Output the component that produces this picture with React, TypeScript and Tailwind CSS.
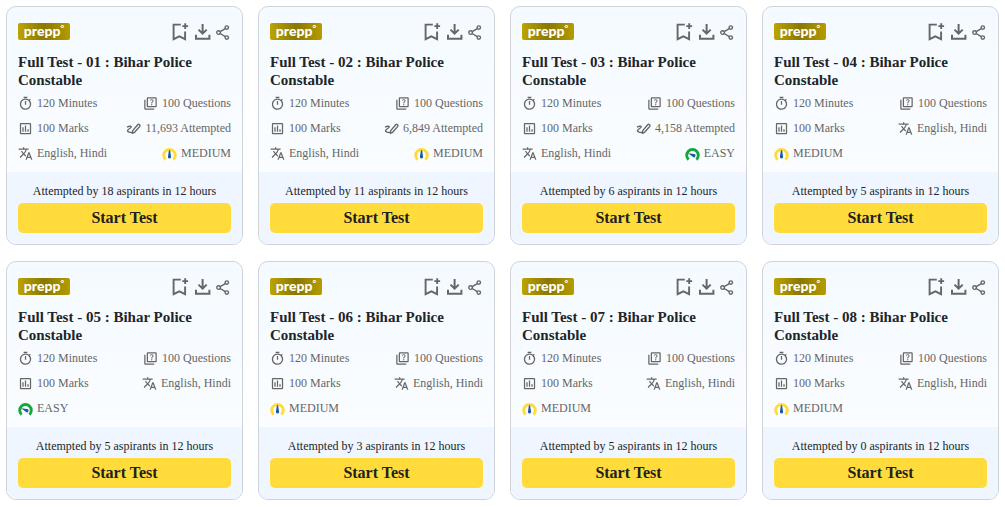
import type { ReactNode } from "react";
import { MdOutlineAssessment, MdOutlineQuiz, MdOutlineTimer, MdTranslate } from "react-icons/md";

type Level = "EASY" | "MEDIUM";

interface Test {
  id: string;
  attempted?: string;
  level: Level;
  recent: number;
}

const tests: Test[] = [
  { id: "01", attempted: "11,693", level: "MEDIUM", recent: 18 },
  { id: "02", attempted: "6,849", level: "MEDIUM", recent: 11 },
  { id: "03", attempted: "4,158", level: "EASY", recent: 6 },
  { id: "04", level: "MEDIUM", recent: 5 },
  { id: "05", level: "EASY", recent: 5 },
  { id: "06", level: "MEDIUM", recent: 3 },
  { id: "07", level: "MEDIUM", recent: 5 },
  { id: "08", level: "MEDIUM", recent: 0 },
];

function BookmarkIcon() {
  return (
    <svg width="18" height="18" viewBox="0 0 18 18" fill="none" stroke="currentColor" strokeWidth="1.9" aria-hidden="true">
      <path d="M8.8 1.6H1.6v14.6l5.8-2.8 5.7 2.8V8.4" />
      <path d="M13.2.2v5.9M10.3 3.1h5.8" />
    </svg>
  );
}

function DownloadIcon() {
  return (
    <svg width="16" height="18" viewBox="0 0 16 18" fill="none" stroke="currentColor" strokeWidth="2" aria-hidden="true">
      <path d="M7.6 1v9.4M3.5 6.6l4.1 4.1 4.1-4.1M1 11.8v4h13.4v-4" />
    </svg>
  );
}

function ShareIcon() {
  return (
    <svg width="15" height="18" viewBox="0 0 15 18" fill="none" stroke="currentColor" strokeWidth="1.4" aria-hidden="true">
      <circle cx="2.6" cy="9.6" r="1.8" />
      <circle cx="10.8" cy="4.6" r="1.7" />
      <circle cx="10.8" cy="14.6" r="1.7" />
      <path d="m4.2 8.7 5.1-3.1M4.2 10.5l5.1 3.1" />
    </svg>
  );
}

function PenIcon() {
  return (
    <svg width="15" height="14" viewBox="0 0 15 14" fill="none" stroke="currentColor" strokeWidth="1.4" strokeLinejoin="round" aria-hidden="true">
      <path d="m6.3 11.3.4-2.7 5-5.9q.9-.8 1.8 0t.1 1.9l-5 5.7z" />
      <path d="M1 5.2c1.4-.9 3.8-1.5 4.3-.6.6 1.3-3.8 2.4-3.8 4.1 0 1.2 1.8 1.6 4.8 1.9" />
    </svg>
  );
}

function GaugeIcon({ level }: { level: Level }) {
  const easy = level === "EASY";
  return (
    <svg width="15" height="14" viewBox="0 0 15 14" fill="none" aria-hidden="true">
      <path d="M3.6 12.6A5.8 5.8 0 1 1 11.4 12.6" stroke={easy ? "#16a63a" : "#ffdc3c"} strokeWidth="2.9" />
      {easy ? (
        <path d="m3 6.3 6 .7a1.6 1.6 0 1 1-1.2 2.8z" fill="#1a57a5" />
      ) : (
        <path d="M6.9 3.2h1.2l.9 6.2a1.6 1.6 0 1 1-3 0z" fill="#1a57a5" />
      )}
    </svg>
  );
}

function Meta({ icon, children }: { icon: ReactNode; children: ReactNode }) {
  return (
    <li className="flex h-6 items-center gap-1 text-xs whitespace-nowrap text-[#666666] even:justify-self-end">
      <span className="flex w-[15px] shrink-0 justify-center pt-px">{icon}</span>
      <span>{children}</span>
    </li>
  );
}

function IconButton({ label, children }: { label: string; children: ReactNode }) {
  return (
    <button type="button" aria-label={label} className="cursor-pointer text-[#666666]">
      {children}
    </button>
  );
}

function TestCard({ test }: { test: Test }) {
  return (
    <article className="flex flex-col overflow-hidden rounded-[10px] border border-[#cfd4da] bg-linear-to-b from-[#f4faff] to-[#fdfeff]">
      <div className="grow px-[11px] pt-4 pb-[7px]">
        <header className="flex h-[17px] items-center justify-between">
          <span className="flex h-[17px] w-[52px] items-center justify-center rounded-xs bg-linear-to-r from-[#bea400] via-[#8a7800] to-[#b59c00] font-['Lato',sans-serif] text-sm leading-[14px] font-black text-white">
            <span className="pb-[2px]">prepp</span>
            <span className="self-start text-[9px] leading-[12px]">°</span>
          </span>
          <div className="flex items-center gap-[5px]">
            <IconButton label="Save test"><BookmarkIcon /></IconButton>
            <IconButton label="Download test"><DownloadIcon /></IconButton>
            <IconButton label="Share test"><ShareIcon /></IconButton>
          </div>
        </header>
        <h2 className="mt-[13px] text-[15px] leading-[18px] font-bold text-[#212529]">
          {`Full Test - ${test.id} : Bihar Police Constable`}
        </h2>
        <ul className="mt-[2px] grid grid-cols-[auto_auto] justify-between gap-y-px">
          <Meta icon={<MdOutlineTimer size={15} />}>120 Minutes</Meta>
          <Meta icon={<MdOutlineQuiz size={15} />}>100 Questions</Meta>
          <Meta icon={<MdOutlineAssessment size={15} />}>100 Marks</Meta>
          {test.attempted && <Meta icon={<PenIcon />}>{`${test.attempted} Attempted`}</Meta>}
          <Meta icon={<MdTranslate size={15} />}>English, Hindi</Meta>
          <Meta icon={<GaugeIcon level={test.level} />}>{test.level}</Meta>
        </ul>
      </div>
      <footer className="bg-[#eff6ff] px-[11px] py-[11px] text-center">
        <p className="text-xs leading-4 text-[#212529]">{`Attempted by ${test.recent} aspirants in 12 hours`}</p>
        <button type="button" className="mt-1 h-[30px] w-full cursor-pointer rounded-[5px] bg-[#ffdc3c] text-base font-bold text-[#212121]">
          Start Test
        </button>
      </footer>
    </article>
  );
}

export default function App() {
  return (
    <main className="grid grid-cols-4 gap-x-[15px] gap-y-4 bg-white p-[6px] font-['Liberation_Serif',serif]">
      {tests.map((test) => (
        <TestCard key={test.id} test={test} />
      ))}
    </main>
  );
}
